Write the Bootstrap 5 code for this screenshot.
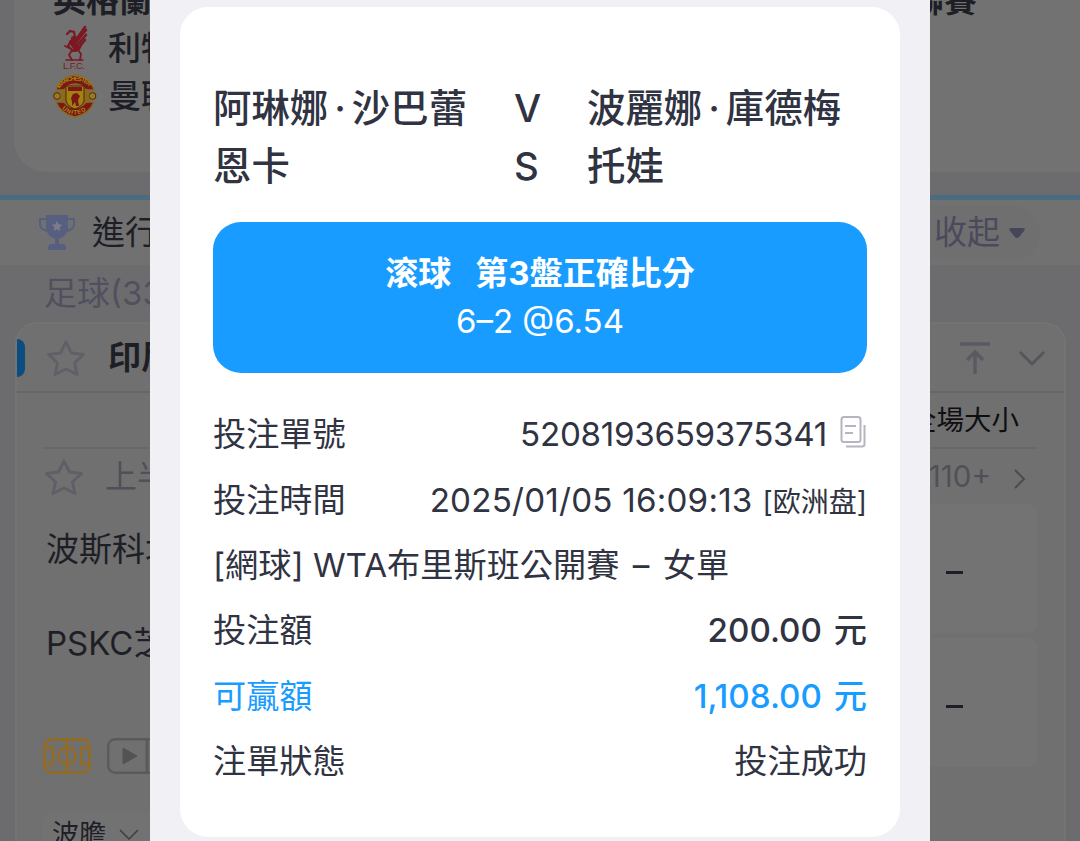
<!DOCTYPE html>
<html lang="zh-Hant">
<head>
    <meta charset="UTF-8">
    <meta name="viewport" content="width=device-width, initial-scale=1.0">
    <title>投注單</title>
    <link href="https://cdn.jsdelivr.net/npm/bootstrap@5.3.0/dist/css/bootstrap.min.css" rel="stylesheet">
    <style>
        body {
            font-family: Inter, "Noto Sans CJK TC", sans-serif;
            background: #6c6c6e;
            color: #1e1f26;
            width: 1080px;
            height: 841px;
            overflow: hidden;
            position: relative;
            white-space: nowrap;
        }
        svg { display: block; flex: none; }

        /* dimmed page */
        .league-box {
            height: 172px;
            margin-left: 14px;
            padding-left: 39px;
            background: #727272;
            border-bottom-left-radius: 32px;
            font-size: 33px;
            overflow: hidden;
        }
        .league-name { height: 48px; line-height: 48px; margin-top: -24px; font-weight: 700; }
        .club-row { height: 48px; line-height: 48px; font-weight: 500; }
        .live-bar { height: 70px; margin-top: 23px; border-top: 5px solid #4b6b80; background: #717171; padding-left: 38px; font-size: 33px; }
        .fold-pill { height: 54px; width: 160px; background: #6f6f70; color: #4a4a5c; border-radius: 27px; margin-right: 40px; padding-right: 14px; }
        .sport-label { height: 57px; line-height: 57px; padding-left: 44px; font-size: 33px; color: #50505f; }
        .match-box { margin: 0 14px 0 15px; height: 540px; background: #707070; border: 2px solid #737374; border-radius: 22px 22px 0 0; }
        .match-head { height: 69px; border-bottom: 2px solid #666668; padding-right: 18px; }
        .blue-tab { width: 8px; height: 38px; background: #0b4d80; border-radius: 0 8px 8px 0; }
        .match-body { padding: 0 26px; }
        .col-titles { height: 56px; border-bottom: 2px solid #686869; padding: 2px 19px 0 0; font-size: 27.5px; color: #0f0f11; }
        .half-row { height: 55px; font-size: 32px; color: #505058; }
        .odds-cell { width: 260px; height: 129px; background: #737373; border-radius: 10px; padding: 8px 75px 0 0; }
        .odds-dash { width: 17px; height: 2.5px; background: #1e1f26; }
        .team-label { font-size: 33px; padding: 2px 0 0 3px; }
        .play-tag { width: 120px; height: 46px; background: #727273; border-radius: 8px; padding-left: 9px; font-size: 27px; }

        /* bet slip */
        .slip-panel { position: absolute; left: 150px; top: 0; width: 780px; height: 841px; background: #f0f0f5; padding: 7px 30px 4px; }
        .slip-paper { height: 830px; background: #fff; border-radius: 28px; padding: 72px 33px 0; color: #303341; }
        .versus { font-size: 38.4px; line-height: 58px; font-weight: 500; height: 143px; }
        .versus-home { width: 301px; }
        .versus-mid { width: 73px; }
        .name-dot { padding: 0 6px; }
        .pick-box { height: 151px; background: #189cff; color: #fff; border-radius: 28px; padding-top: 27px; font-size: 33px; line-height: 48px; }
        .slip-line { height: 65.4px; font-size: 33.2px; }
        .slip-list { padding-top: 29.5px; }
        .num-id { letter-spacing: -.3px; }
        .num-time { letter-spacing: .2px; }
        .money { font-weight: 500; word-spacing: 3px; }
        .blue-text { color: #189cff; }
    </style>
</head>
<body>
    <div class="league-box">
        <div class="league-name d-flex justify-content-between"><span>英格蘭超級</span><span style="padding-right:103px">聯賽</span></div>
        <div class="club-row d-flex align-items-center">
            <svg width="44" height="48" viewBox="0 0 44 48">
                <g fill="none" stroke="#7c1823" stroke-width="2.2" stroke-linecap="round">
                    <path d="M14 10l3-3 4 1 1 5-4 4-3 5 5 5 6-2 3-6"/>
                    <path d="M21 16l4-3 7-10M24 17l9-11M25 20l8-9M26 23l6-7" stroke-width="2.6"/>
                    <path d="M18 18l5 8M20 14l4 10" stroke-width="4"/>
                    <path d="M19 26l-3 5 3 5M25 26l3 4-1 6M12 22l4 2" stroke-width="1.8"/>
                    <path d="M13 36h17" stroke-width="1.3"/>
                </g>
                <text x="10" y="44.5" font-family="Liberation Sans" font-size="9.5" textLength="22" fill="#7c1823">L.F.C.</text>
            </svg>
            <span style="padding-left:11px">利物浦</span>
        </div>
        <div class="club-row d-flex align-items-center">
            <svg width="44" height="48" viewBox="0 0 44 48">
                <circle cx="4" cy="24" r="3.4" fill="#9a7c16" stroke="#54200f"/>
                <circle cx="39.5" cy="24" r="3.4" fill="#9a7c16" stroke="#54200f"/>
                <path d="M3 18Q7 5 22 3Q37 5 41 18L33 18Q29 12 22 12Q15 12 11 18Z" fill="#7c1716" stroke="#8c6b16" stroke-width="1.3"/>
                <path d="M3 30Q8 42 22 45Q36 42 41 30L33 30Q29 36 22 36Q15 36 11 30Z" fill="#7c1716" stroke="#8c6b16" stroke-width="1.3"/>
                <path d="M9 17h4v14H9q-3-7 0-14zM35 17h-4v14h4q3-7 0-14z" fill="#8c6b16"/>
                <path d="M13 14h18v15q-2 6-9 8q-7-2-9-8z" fill="#a08213" stroke="#54200f"/>
                <path d="M15 15h14v4H15zM20 22l4-1 3 3-2 4 1 6h-3l-1-4-3 4v-4l-1-4z" fill="#7c1716"/>
                <path id="arcTop" d="M7 17Q11 8.500 22 8.500Q33 8.500 37 17" fill="none"/>
                <path id="arcLow" d="M9 36.500Q15 42.500 22 42.500Q29 42.500 35 36.500" fill="none"/>
                <g font-family="Liberation Sans" font-size="6" font-weight="700" fill="#a58917">
                    <text><textPath href="#arcTop" textLength="34">MANCHESTER</textPath></text>
                    <text><textPath href="#arcLow" textLength="27">UNITED</textPath></text>
                </g>
            </svg>
            <span style="padding-left:11px">曼聯</span>
        </div>
    </div>

    <div class="live-bar d-flex align-items-center justify-content-between">
        <div class="d-flex align-items-center">
            <svg width="38" height="38" viewBox="0 0 38 38">
                <path d="M8 1h22v14q-2 9-11 10Q10 24 8 15z" fill="#565f80"/>
                <path d="M8 5H2v6q1 5 8 6M30 5h6v6q-1 5-8 6" fill="none" stroke="#565f80" stroke-width="2"/>
                <path d="M17 24h4v6h6v2h1v4H10v-4h1v-2h6z" fill="#565f80"/>
                <path d="M19 7l1.700 3.300 3.600.5-2.600 2.600.6 3.600-3.300-1.700-3.300 1.700.6-3.600-2.600-2.600 3.600-.5z" fill="#7a7d88"/>
            </svg>
            <span style="padding-left:16px">進行中</span>
        </div>
        <div class="fold-pill d-flex align-items-center justify-content-end">
            <span>收起</span>
            <svg class="ms-2" width="18" height="14" viewBox="0 0 18 14"><path d="M3 2h12q3 0 1 3l-5 6q-2 2-4 0L2 5Q0 2 3 2z" fill="#46465a"/></svg>
        </div>
    </div>
    <div class="sport-label">足球(33)</div>

    <div class="match-box">
        <div class="match-head d-flex align-items-center justify-content-between">
            <div class="d-flex align-items-center">
                <div class="blue-tab"></div>
                <svg style="margin-left:20px" width="42" height="38" viewBox="0 0 42 38"><path d="M21 3l5.500 11 12 1.500-9 8.500 2.500 11.500L21 30l-11 5.500L12.500 24l-9-8.500 12-1.500z" fill="none" stroke="#606168" stroke-width="3" stroke-linejoin="round"/></svg>
                <span class="fw-bold" style="font-size:33px;padding-left:21px">印尼超級聯賽</span>
            </div>
            <div class="d-flex align-items-center">
                <svg width="30" height="34" viewBox="0 0 30 34" fill="none" stroke="#5a5b62" stroke-width="3.500"><path d="M0 3h30M15 33V13M7 19l8-8 8 8"/></svg>
                <svg style="margin-left:28px" width="28" height="18" viewBox="0 0 28 18"><path d="M2 3l12 12L26 3" fill="none" stroke="#55565a" stroke-width="3"/></svg>
            </div>
        </div>
        <div class="match-body">
            <div class="col-titles d-flex align-items-center justify-content-end">全場大小</div>
            <div class="half-row d-flex align-items-center justify-content-between">
                <div class="d-flex align-items-center">
                    <svg width="42" height="38" viewBox="0 0 42 38"><path d="M21 3l5.500 11 12 1.500-9 8.500 2.500 11.500L21 30l-11 5.500L12.500 24l-9-8.500 12-1.500z" fill="none" stroke="#5f6067" stroke-width="3" stroke-linejoin="round"/></svg>
                    <span style="padding-left:20px">上半場</span>
                </div>
                <div class="d-flex align-items-center" style="padding-right:12px;font-size:29.5px">
                    <span>110+</span>
                    <svg style="margin-left:23px;margin-top:4px" width="12" height="20" viewBox="0 0 12 20"><path d="M1 1l9 9-9 9" fill="none" stroke="#4b4b52" stroke-width="2"/></svg>
                </div>
            </div>
            <div class="d-flex justify-content-between">
                <div class="team-label">
                    <div style="height:93px;line-height:87px">波斯科塔</div>
                    <div style="height:101px;line-height:88px">PSKC芝馬希</div>
                    <div class="d-flex align-items-center" style="margin-left:-3px;height:112px;gap:16px">
                        <svg width="48" height="36" viewBox="0 0 48 36" fill="none" stroke="#966b1c" stroke-width="2.300"><rect x="1.500" y="1.500" width="45" height="33" rx="7"/><path d="M24 1v34M2 9.500h6q2 0 2 2v13q0 2-2 2H2M46 9.500h-6q-2 0-2 2v13q0 2 2 2h6"/><circle cx="24" cy="18" r="8.500"/></svg>
                        <svg width="60" height="36" viewBox="0 0 60 36"><rect x="1.200" y="1.200" width="50" height="33.600" rx="7" fill="none" stroke="#5a5a5a" stroke-width="2.400"/><path d="M40 1v34" stroke="#5a5a5a" stroke-width="3"/><path d="M16 10l14 8-14 8z" fill="#535354" stroke="#535354"/></svg>
                    </div>
                    <div class="play-tag d-flex align-items-center" style="margin-left:-3px">
                        <span>波膽</span>
                        <svg style="margin-left:13px" width="20" height="12" viewBox="0 0 20 12"><path d="M1 1l9 9 9-9" fill="none" stroke="#3c3c43" stroke-width="1.500"/></svg>
                    </div>
                </div>
                <div class="d-flex flex-column" style="gap:5px">
                    <div class="odds-cell d-flex align-items-center justify-content-end"><span class="odds-dash"></span></div>
                    <div class="odds-cell d-flex align-items-center justify-content-end"><span class="odds-dash"></span></div>
                </div>
            </div>
        </div>
    </div>

    <div class="slip-panel">
        <div class="slip-paper">
            <div class="versus d-flex">
                <div class="versus-home">阿琳娜<span class="name-dot">·</span>沙巴蕾<br>恩卡</div>
                <div class="versus-mid">V<br>S</div>
                <div>波麗娜<span class="name-dot">·</span>庫德梅<br>托娃</div>
            </div>
            <div class="pick-box text-center">
                <div><span class="fw-bold">滚球</span><span class="fw-bold" style="padding-left:24px">第3盤正確比分</span></div>
                <div>6–2 @6.54</div>
            </div>
            <div class="slip-list">
                <div class="slip-line d-flex align-items-center justify-content-between">
                    <span>投注單號</span>
                    <div class="d-flex align-items-center">
                        <span class="num-id">5208193659375341</span>
                        <svg style="margin-left:13px;margin-right:1px;margin-bottom:7px" width="26" height="34" viewBox="0 0 26 34" fill="none" stroke="#b4b5c0" stroke-width="2"><rect x="1.500" y="2" width="19" height="25" rx="2.500"/><path d="M5 11h11M5 18h8M24.500 10v19q0 2.500-2.500 2.500H6"/></svg>
                    </div>
                </div>
                <div class="slip-line d-flex align-items-center justify-content-between">
                    <span>投注時間</span>
                    <div class="d-flex align-items-baseline"><span class="num-time">2025/01/05 16:09:13</span><span style="font-size:28px;padding-left:10px">[欧洲盘]</span></div>
                </div>
                <div class="slip-line d-flex align-items-center"><span>[網球] WTA布里斯班公開賽<span style="padding:0 4px"> – </span>女單</span></div>
                <div class="slip-line d-flex align-items-center justify-content-between"><span>投注額</span><span class="money">200.00 元</span></div>
                <div class="slip-line blue-text d-flex align-items-center justify-content-between"><span>可贏額</span><span class="money">1,108.00 元</span></div>
                <div class="slip-line d-flex align-items-center justify-content-between"><span>注單狀態</span><span>投注成功</span></div>
            </div>
        </div>
    </div>

    <script src="https://cdn.jsdelivr.net/npm/bootstrap@5.3.0/dist/js/bootstrap.bundle.min.js"></script>
</body>
</html>
